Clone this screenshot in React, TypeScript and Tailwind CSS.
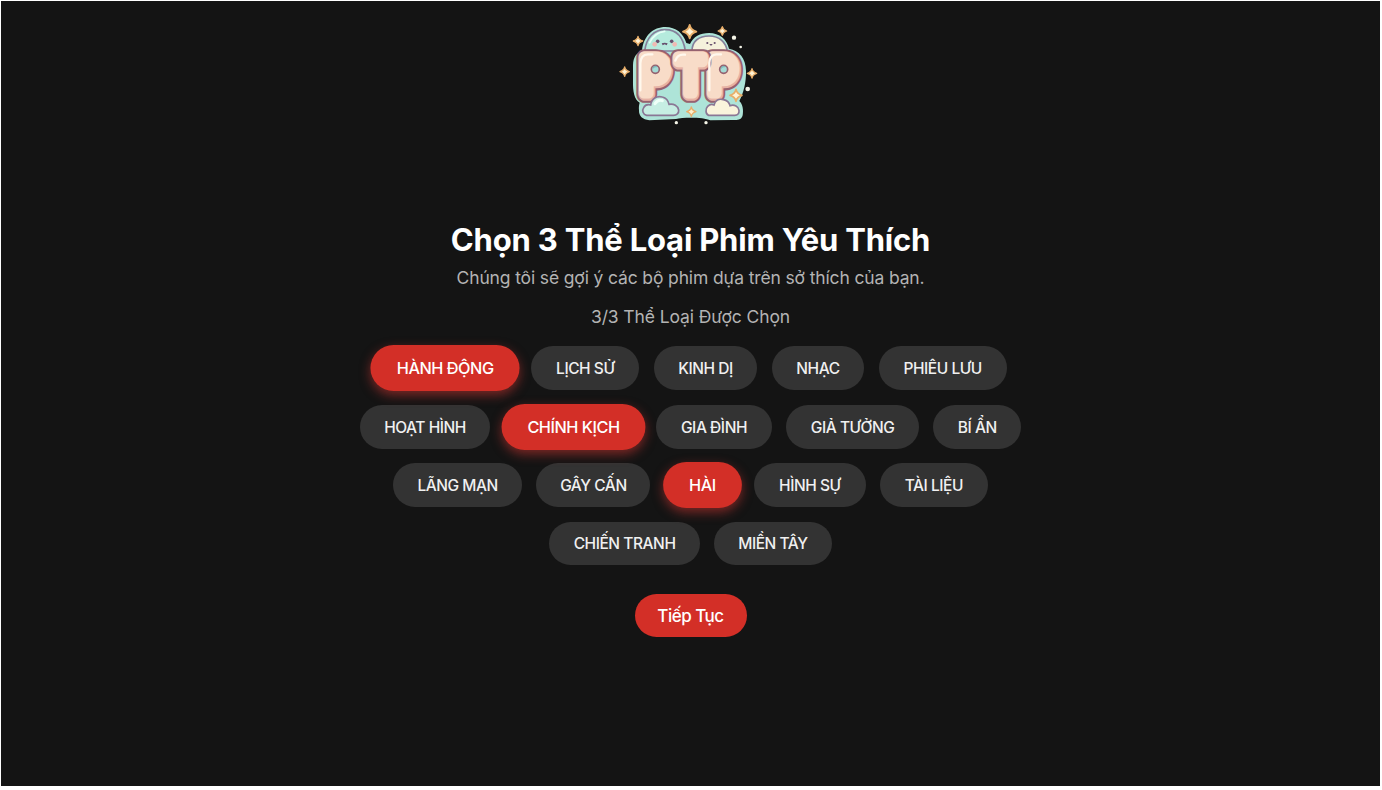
import { useState } from "react";

type Genre = { name: string; width: string };

const rows: Genre[][] = [
  [
    { name: "HÀNH ĐỘNG", width: "w-[142.4px]" },
    { name: "LỊCH SỬ", width: "w-[108.2px]" },
    { name: "KINH DỊ", width: "w-[103.6px]" },
    { name: "NHẠC", width: "w-[92.5px]" },
    { name: "PHIÊU LƯU", width: "w-[128px]" },
  ],
  [
    { name: "HOẠT HÌNH", width: "w-[130.6px]" },
    { name: "CHÍNH KỊCH", width: "w-[137px]" },
    { name: "GIA ĐÌNH", width: "w-[115.8px]" },
    { name: "GIẢ TƯỞNG", width: "w-[132.6px]" },
    { name: "BÍ ẨN", width: "w-[88px]" },
  ],
  [
    { name: "LÃNG MẠN", width: "w-[128.8px]" },
    { name: "GÂY CẤN", width: "w-[114px]" },
    { name: "HÀI", width: "w-[74.8px]" },
    { name: "HÌNH SỰ", width: "w-[111.6px]" },
    { name: "TÀI LIỆU", width: "w-[107.8px]" },
  ],
  [
    { name: "CHIẾN TRANH", width: "w-[150.4px]" },
    { name: "MIỀN TÂY", width: "w-[117.4px]" },
  ],
];

function Spark({ x, y, r, fill = "#fff3d6" }: { x: number; y: number; r: number; fill?: string }) {
  return (
    <path
      transform={`translate(${x} ${y}) scale(${r / 10})`}
      d="M0-10Q1.5-2.5 10 0Q1.5 2.5 0 10Q-1.5 2.5-10 0Q-1.5-2.5 0-10Z"
      fill={fill}
      stroke="#e8ae69"
      strokeWidth="2.8"
      strokeLinejoin="round"
    />
  );
}

function Letter({ x, sx, children }: { x: number; sx: number; children: string }) {
  return (
    <g
      transform={`translate(${x} 237) scale(${sx} 1)`}
      fontFamily="Inter, sans-serif"
      fontWeight="500"
      fontSize="148"
      strokeLinejoin="round"
    >
      <text fill="#96626f" stroke="#96626f" strokeWidth="53">{children}</text>
      <text fill="#e6b2a5" stroke="#e6b2a5" strokeWidth="40">{children}</text>
      <text x="-1" y="-3" fill="#f8dcc8" stroke="#f8dcc8" strokeWidth="33">{children}</text>
    </g>
  );
}

function Logo() {
  return (
    <svg width="160" height="115" viewBox="0 0 480 345" aria-hidden="true">
      <path
        d="M96 108C100 62 130 36 166 36C198 36 220 55 229 84L240 87C250 65 270 54 297 54C329 54 350 73 357 101C388 106 407 130 408 167C409 202 400 235 388 258C398 267 401 285 398 301C395 314 385 316 368 315L301 316C280 306 218 307 198 312L118 316C98 314 86 303 87 286C86 277 87 270 89 263C73 253 68 231 69 195V150C70 127 79 114 96 108Z"
        fill="#aee4d8"
      />
      <path d="M104 108C109 67 132 44 166 44C199 44 220 67 226 108Z" fill="#b5ebdd" stroke="#85809b" strokeWidth="5" />
      <path d="M119 83Q134 52 164 49" fill="none" stroke="#e7fff6" strokeWidth="5" strokeLinecap="round" />
      <path d="M246 108C246 78 267 63 297 63C329 63 348 82 352 109Z" fill="#f5f2dc" stroke="#85809b" strokeWidth="5" />
      <g fill="#67506e">
        <circle cx="143" cy="79" r="5.5" />
        <circle cx="185" cy="79" r="5.5" />
        <circle cx="292" cy="84" r="3.2" />
        <circle cx="314" cy="84" r="3.2" />
        <path d="M155 85Q164 81 173 85L170 91L164 88L158 91Z" />
        <path d="M298 87H308L303 93Z" />
      </g>
      <g fill="#f1b9b3">
        <circle cx="134" cy="88" r="7" />
        <circle cx="194" cy="88" r="7" />
      </g>
      <Letter x={92} sx={0.9}>P</Letter>
      <Letter x={296} sx={0.9}>P</Letter>
      <Letter x={199} sx={0.9}>T</Letter>
      <g fill="#a4dbd5" stroke="#96626f" strokeWidth="5">
        <circle cx="136" cy="163" r="12" />
        <circle cx="341" cy="163" r="12" />
      </g>
      <g fill="none" stroke="#fff8ed" strokeWidth="7" strokeLinecap="round">
        <path d="M91 226V145Q92 119 114 118H127" />
        <path d="M196 137Q202 119 219 119H225" />
        <path d="M298 226V143Q300 119 319 118H333" />
      </g>
      <g fill="none" stroke="#7db5b8" strokeWidth="4" strokeLinecap="round">
        <path d="M129 159Q133 153 139 155" />
        <path d="M334 159Q338 153 344 155" />
      </g>
      <path d="M110 301C99 299 95 286 101 278C105 270 114 268 122 270C124 251 141 241 157 246C168 249 175 258 177 268C191 265 204 273 206 285C207 295 200 301 190 301Z" fill="#c6eee3" stroke="#8a7795" strokeWidth="5" />
      <path d="M135 266Q144 252 157 257" fill="none" stroke="#eefff8" strokeWidth="9" strokeLinecap="round" />
      <path d="M296 301C286 298 286 281 293 274C299 268 307 267 312 270C315 256 327 250 340 254C350 256 358 263 360 272C373 267 386 275 387 286C388 295 383 301 374 301Z" fill="#faf4dc" stroke="#8a7795" strokeWidth="5" />
      <Spark x={239} y={50} r={20} />
      <Spark x={84} y={78} r={14} />
      <Spark x={337} y={48} r={13} />
      <Spark x={44} y={170} r={14} />
      <Spark x={426} y={175} r={14} />
      <Spark x={378} y={241} r={18} />
      <Spark x={244} y={290} r={14} fill="#fff1cd" />
      <g fill="#f5f5e8">
        <circle cx="372" cy="68" r="6.5" />
        <circle cx="392" cy="96" r="4" />
        <circle cx="413" cy="222" r="7" />
        <circle cx="199" cy="323" r="5" />
        <circle cx="288" cy="323" r="5" />
      </g>
    </svg>
  );
}

export default function App() {
  const [selected, setSelected] = useState(["HÀNH ĐỘNG", "CHÍNH KỊCH", "HÀI"]);

  const toggle = (name: string) =>
    setSelected((current) =>
      current.includes(name)
        ? current.filter((item) => item !== name)
        : current.length < 3
          ? [...current, name]
          : current,
    );

  return (
    <div className="h-[790px] w-[1382px] overflow-hidden bg-white pt-px pl-px font-['Inter',sans-serif]">
      <main className="flex h-[785px] w-[1379px] flex-col items-center bg-[#141414]">
        <header className="mt-[14px] mr-[2px] h-[115px] w-[160px]">
          <Logo />
        </header>
        <h1 className="mt-[90px] h-10 text-[31px] leading-10 font-bold tracking-[-0.2px] whitespace-nowrap text-white">
          Chọn 3 Thể Loại Phim Yêu Thích
        </h1>
        <p className="mt-[6px] h-6 text-[17.5px] leading-6 tracking-[-0.14px] whitespace-nowrap text-[#b3b3b3]">
          Chúng tôi sẽ gợi ý các bộ phim dựa trên sở thích của bạn.
        </p>
        <p className="mt-[15px] h-6 text-[17.5px] leading-6 tracking-[-0.1px] whitespace-nowrap text-[#b3b3b3]">
          {selected.length}/3 Thể Loại Được Chọn
        </p>
        <section className="mt-[17.4px] flex flex-col items-center gap-[14.6px]">
          {rows.map((row, i) => (
            <div key={i} className="flex gap-[14.4px]">
              {row.map(({ name, width }) => (
                <button
                  key={name}
                  onClick={() => toggle(name)}
                  className={`${width} h-[43.8px] rounded-full pt-[1.4px] text-[15.5px] leading-none font-[450] tracking-[-0.45px] whitespace-nowrap ${
                    selected.includes(name)
                      ? "scale-105 bg-[#d32f27] text-white shadow-[0_4px_10px_rgba(229,57,53,0.5)]"
                      : "bg-[#333333] text-[#f0f0f0]"
                  }`}
                >
                  {name}
                </button>
              ))}
            </div>
          ))}
        </section>
        <button className="mt-[28.7px] h-[43.4px] w-[112px] rounded-full bg-[#d32f27] pt-[1.4px] text-[17px] leading-none font-[450] tracking-[-0.5px] text-white">
          Tiếp Tục
        </button>
      </main>
    </div>
  );
}
